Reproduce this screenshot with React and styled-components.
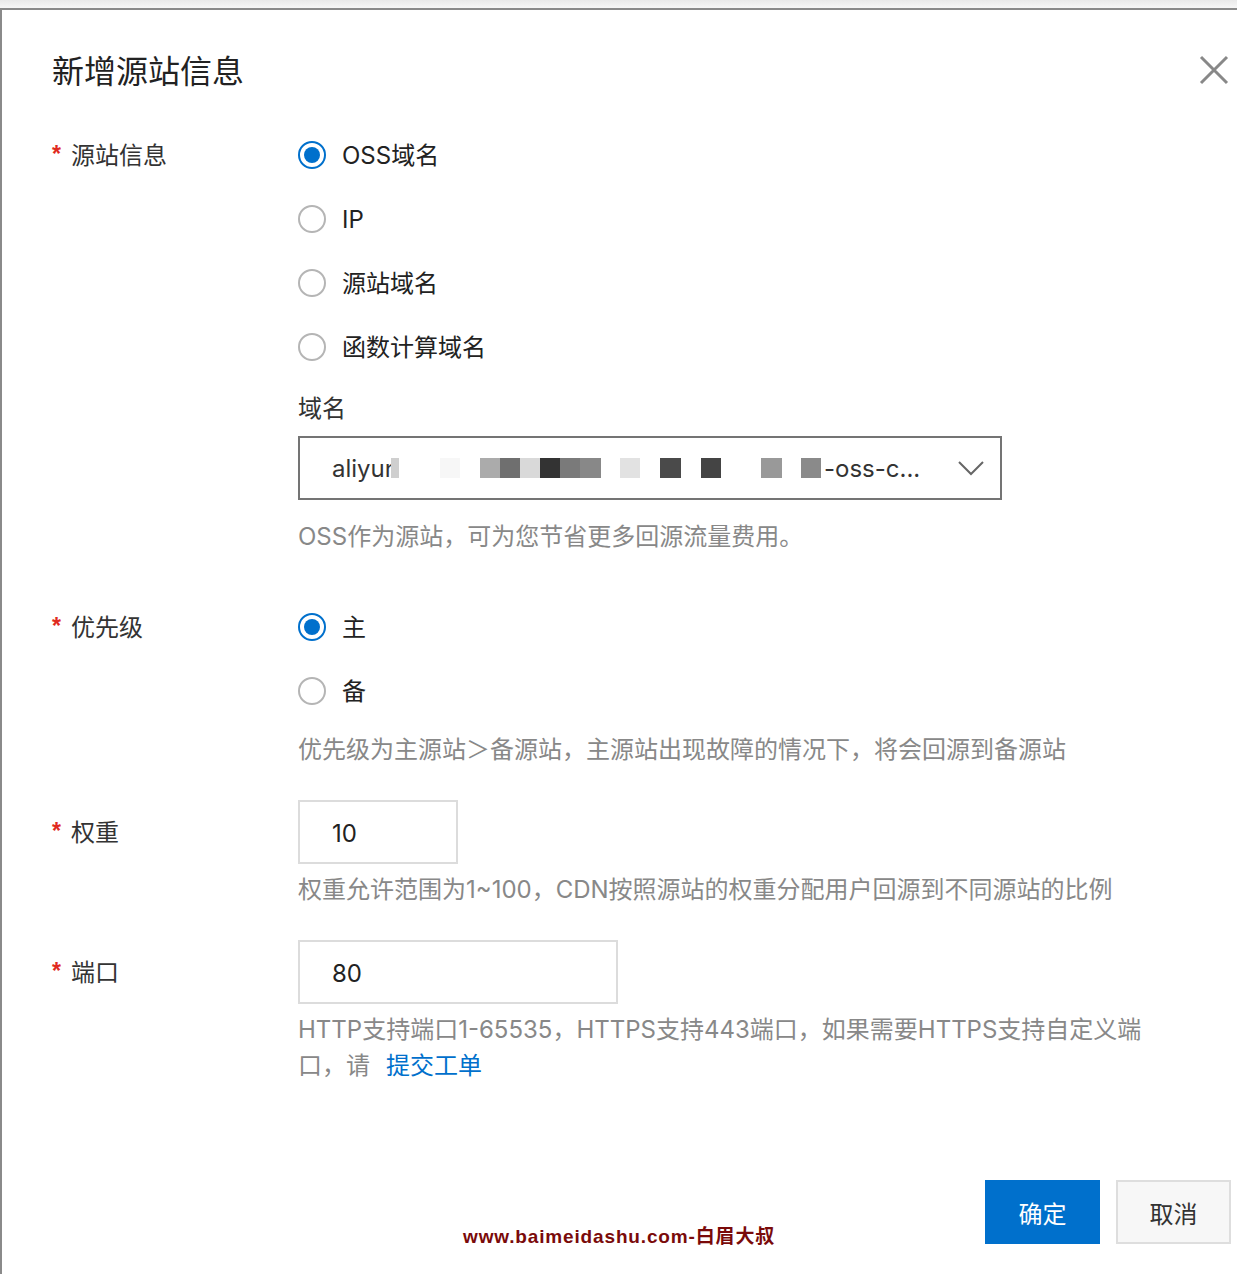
import React from "react";
import styled, { createGlobalStyle } from "styled-components";

const Global = createGlobalStyle`
  html, body { margin: 0; padding: 0; background: #fff; }
  body { font-family: "Noto Sans CJK SC", "Noto Sans", sans-serif; color: #333; }
  * { box-sizing: border-box; }
`;

const FONT = `"Inter", "Noto Sans CJK SC", sans-serif`;

const Page = styled.div`
  width: 1237px;
  height: 1274px;
  overflow: hidden;
  position: relative;
  background: linear-gradient(#e9e9e9, #f7f7f7 8px);
  padding-top: 8px;
`;

const Dialog = styled.div`
  background: #fff;
  border-top: 2px solid #8a8a8a;
  border-left: 2px solid #8a8a8a;
  height: 100%;
  padding: 36px 6px 0 50px;
  position: relative;
  font-family: ${FONT};
`;

const Header = styled.div`
  display: flex;
  justify-content: space-between;
  align-items: center;
  height: 44px;
  padding-right: 2px;
`;

const Title = styled.h1`
  margin: 0;
  padding-top: 2px;
  font-family: "Noto Sans CJK SC", sans-serif;
  font-size: 32px;
  font-weight: 400;
  line-height: 44px;
  color: #222;
`;

const Close = styled.button`
  border: 0;
  background: none;
  padding: 0;
  width: 30px;
  height: 30px;
  display: flex;
  align-items: center;
  justify-content: center;
  margin-top: 4px;
  cursor: pointer;
`;

const Form = styled.div`
  margin-top: 33px;
  display: flex;
  flex-direction: column;
`;

const Field = styled.div`
  display: grid;
  grid-template-columns: 246px 1fr;
  margin-top: ${(p) => p.$gap || 0}px;
`;

const Label = styled.div`
  height: 64px;
  display: flex;
  align-items: center;
  font-size: 24px;
  color: #333;
  line-height: 1;
  padding-top: 2px;
`;

const Star = styled.span`
  color: #e02a20;
  font-size: 23px;
  font-weight: 700;
  width: 19px;
  margin-top: -4px;
  font-family: "Liberation Sans", sans-serif;
`;

const Control = styled.div`
  display: flex;
  flex-direction: column;
  align-items: flex-start;
`;

const RadioRow = styled.label`
  height: 64px;
  display: flex;
  align-items: center;
  gap: 16px;
  font-size: 24px;
  color: #222;
  line-height: 1;
`;

const RadioText = styled.span`
  padding-top: 2px;
`;

const Circle = styled.span`
  width: 28px;
  height: 28px;
  border-radius: 50%;
  border: 2px solid ${(p) => (p.$on ? "#0070cc" : "#b5b5b5")};
  display: flex;
  align-items: center;
  justify-content: center;
  flex: none;
  &::after {
    content: "";
    width: 16px;
    height: 16px;
    border-radius: 50%;
    background: ${(p) => (p.$on ? "#0070cc" : "transparent")};
  }
`;

const SubLabel = styled.div`
  margin-top: 13px;
  height: 32px;
  line-height: 34px;
  font-size: 24px;
  color: #333;
`;

const Select = styled.div`
  margin-top: 12px;
  width: 704px;
  height: 64px;
  border: 2px solid #747474;
  display: flex;
  align-items: center;
  padding: 0 16px 0 32px;
  font-size: 24px;
  color: #333;
`;

const SelectText = styled.div`
  flex: 1;
  display: flex;
  align-items: center;
  white-space: nowrap;
  overflow: hidden;
`;

const Mosaic = styled.span`
  display: inline-block;
  width: ${(p) => p.$w}px;
  height: 20px;
  background: ${(p) => p.$c};
  margin-left: ${(p) => p.$ml || 0}px;
  flex: none;
`;

const Help = styled.div`
  margin-top: ${(p) => p.$mt || 8}px;
  font-size: 24px;
  line-height: 36px;
  color: #888;
  white-space: nowrap;
`;

const Link = styled.a`
  color: #0070cc;
  text-decoration: none;
  margin-left: 16px;
`;

const Input = styled.div`
  width: ${(p) => p.$w}px;
  height: 64px;
  border: 2px solid #dcdcdc;
  display: flex;
  align-items: center;
  padding-left: 32px;
  padding-top: 2px;
  font-size: 24px;
  color: #222;
`;

const Footer = styled.div`
  display: flex;
  justify-content: flex-end;
  gap: 16px;
  margin-top: 96px;
`;

const Button = styled.button`
  width: 115px;
  height: 64px;
  font-family: "Noto Sans CJK SC", sans-serif;
  font-size: 24px;
  border: ${(p) => (p.$primary ? "0" : "2px solid #dedede")};
  background: ${(p) => (p.$primary ? "#0070cc" : "#f7f7f7")};
  color: ${(p) => (p.$primary ? "#fff" : "#333")};
  padding: 0;
  cursor: pointer;
`;

const Watermark = styled.div`
  position: absolute;
  left: 463px;
  top: 1224px;
  font-family: "Liberation Sans", "Noto Sans CJK SC", sans-serif;
  font-weight: 700;
  font-size: 19px;
  line-height: 26px;
  color: #7a0a0a;
  letter-spacing: 0.85px;
  white-space: nowrap;
`;

const Radio = ({ on, children }) => (
  <RadioRow>
    <Circle $on={on} />
    <RadioText>{children}</RadioText>
  </RadioRow>
);

const blocks = [
  { w: 8, c: "#cfcfcf", ml: -8 },
  { w: 20, c: "#f7f7f7", ml: 41 },
  { w: 20, c: "#ababab", ml: 20 },
  { w: 20, c: "#6f6f6f" },
  { w: 20, c: "#d9d9d9" },
  { w: 20, c: "#333333" },
  { w: 20, c: "#7a7a7a" },
  { w: 21, c: "#888888" },
  { w: 20, c: "#e2e2e2", ml: 19 },
  { w: 21, c: "#4a4a4a", ml: 20 },
  { w: 20, c: "#444444", ml: 20 },
  { w: 21, c: "#999999", ml: 40 },
  { w: 20, c: "#8a8a8a", ml: 19 },
];

export default function App() {
  return (
    <>
      <Global />
      <Page>
        <Dialog>
          <Header>
            <Title>新增源站信息</Title>
            <Close aria-label="close">
              <svg width="30" height="30" viewBox="0 0 30 30">
                <path d="M2 2 L28 28 M28 2 L2 28" stroke="#888" strokeWidth="3" fill="none" />
              </svg>
            </Close>
          </Header>
          <Form>
            <Field>
              <Label><Star>*</Star>源站信息</Label>
              <Control>
                <Radio on>OSS域名</Radio>
                <Radio>IP</Radio>
                <Radio>源站域名</Radio>
                <Radio>函数计算域名</Radio>
                <SubLabel>域名</SubLabel>
                <Select>
                  <SelectText>
                    aliyun
                    {blocks.map((b, i) => (
                      <Mosaic key={i} $w={b.w} $c={b.c} $ml={b.ml} />
                    ))}
                    <span style={{ marginLeft: 3 }}>-oss-c...</span>
                  </SelectText>
                  <svg width="26" height="16" viewBox="0 0 26 16">
                    <path d="M1 2 L13 14 L25 2" stroke="#666" strokeWidth="2" fill="none" />
                  </svg>
                </Select>
                <Help $mt={19}>OSS作为源站，可为您节省更多回源流量费用。</Help>
              </Control>
            </Field>
            <Field $gap={40}>
              <Label><Star>*</Star>优先级</Label>
              <Control>
                <Radio on>主</Radio>
                <Radio>备</Radio>
                <Help $mt={9}>优先级为主源站＞备源站，主源站出现故障的情况下，将会回源到备源站</Help>
              </Control>
            </Field>
            <Field $gap={32}>
              <Label><Star>*</Star>权重</Label>
              <Control>
                <Input $w={160}>10</Input>
                <Help>权重允许范围为1~100，CDN按照源站的权重分配用户回源到不同源站的比例</Help>
              </Control>
            </Field>
            <Field $gap={32}>
              <Label><Star>*</Star>端口</Label>
              <Control>
                <Input $w={320}>80</Input>
                <Help>
                  <div>HTTP支持端口1-65535，HTTPS支持443端口，如果需要HTTPS支持自定义端</div>
                  <div>
                    口，请<Link href="#">提交工单</Link>
                  </div>
                </Help>
              </Control>
            </Field>
          </Form>
          <Footer>
            <Button $primary>确定</Button>
            <Button>取消</Button>
          </Footer>
        </Dialog>
        <Watermark>www.baimeidashu.com-白眉大叔</Watermark>
      </Page>
    </>
  );
}
